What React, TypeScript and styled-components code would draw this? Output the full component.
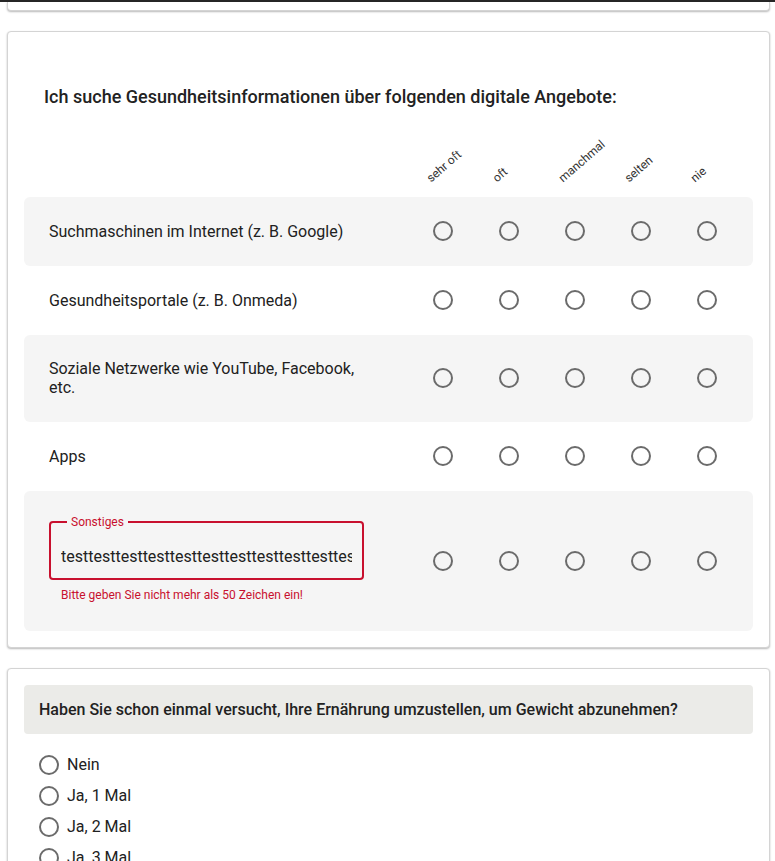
import styled, { createGlobalStyle } from "styled-components";

const GlobalStyle = createGlobalStyle`
  body {
    margin: 0;
    background: #ffffff;
    font-family: Roboto, "Liberation Sans", sans-serif;
    color: #212121;
  }
`;

const TopBar = styled.div`
  height: 2px;
  background: #262626;
`;

const Page = styled.div`
  padding: 0 5px 0 7px;
  display: flex;
  flex-direction: column;
  gap: 20px;
`;

const Card = styled.div<{ $stub?: boolean }>`
  background: #fff;
  border: 1px solid #d4d4d4;
  border-radius: 4px;
  box-shadow: 0 1px 2px rgba(0, 0, 0, 0.28);
  padding: ${(p) => (p.$stub ? "0" : "16px")};
  height: ${(p) => (p.$stub ? "8px" : "auto")};
  ${(p) => p.$stub && "border-top: none; border-radius: 0 0 4px 4px;"}
`;

const Title = styled.h2`
  margin: 0;
  padding: 38px 20px 0;
  font-size: 18px;
  line-height: 21px;
  font-weight: 500;
  color: #222;
`;

const Matrix = styled.div`
  display: flex;
  flex-direction: column;
`;

const Row = styled.div<{ $shaded?: boolean }>`
  display: grid;
  grid-template-columns: 1fr repeat(5, 66px);
  align-items: center;
  padding: 24px 13px 25px 25px;
  border-radius: 6px;
  background: ${(p) => (p.$shaded ? "#f5f5f5" : "transparent")};
`;

const HeaderRow = styled.div`
  display: grid;
  grid-template-columns: 1fr repeat(5, 66px);
  align-items: end;
  height: 90px;
  padding: 0 13px 11px 25px;
  box-sizing: border-box;
`;

const HeaderCell = styled.div`
  padding-left: 23px;
`;

const HeaderText = styled.span`
  display: inline-block;
  font-size: 12px;
  line-height: 14px;
  color: #333;
  white-space: nowrap;
  transform-origin: left bottom;
  transform: rotate(-41deg);
`;

const RowLabel = styled.div`
  font-size: 16px;
  line-height: 19px;
  padding-right: 46px;
`;

const Cell = styled.div`
  display: flex;
  justify-content: center;
`;

const Radio = styled.input.attrs({ type: "radio" })`
  appearance: none;
  margin: 0;
  width: 20px;
  height: 20px;
  border: 2px solid #6b6b6b;
  border-radius: 50%;
  box-sizing: border-box;
  background: transparent;
`;

const FieldWrap = styled.div`
  padding: 0 46px 4px 0;
`;

const Field = styled.fieldset`
  margin: 0;
  border: 2px solid #c8102e;
  border-radius: 4px;
  padding: 18px 10px 12px;
`;

const Legend = styled.legend`
  font-size: 12px;
  line-height: 14px;
  color: #c8102e;
  padding: 0 4px;
  margin-left: 6px;
`;

const Input = styled.input`
  display: block;
  width: 100%;
  border: none;
  outline: none;
  background: transparent;
  padding: 0;
  font-family: inherit;
  font-size: 16px;
  line-height: 19px;
  color: #212121;
`;

const ErrorText = styled.div`
  margin-top: 8px;
  padding-left: 12px;
  font-size: 12px;
  line-height: 14px;
  color: #c8102e;
`;

const Question = styled.div`
  background: #ebebe8;
  border-radius: 4px;
  padding: 15px;
  font-size: 16px;
  line-height: 19px;
  font-weight: 500;
  color: #222;
`;

const Options = styled.div`
  margin-top: 15px;
  padding-left: 15px;
  display: flex;
  flex-direction: column;
`;

const Option = styled.label`
  display: flex;
  align-items: center;
  gap: 8px;
  height: 31px;
  font-size: 16px;
`;

const columns = ["sehr oft", "oft", "manchmal", "selten", "nie"];
const items = [
  "Suchmaschinen im Internet (z. B. Google)",
  "Gesundheitsportale (z. B. Onmeda)",
  "Soziale Netzwerke wie YouTube, Facebook, etc.",
  "Apps",
];

function Radios({ name }: { name: string }) {
  return (
    <>
      {columns.map((c) => (
        <Cell key={c}>
          <Radio name={name} />
        </Cell>
      ))}
    </>
  );
}

export default function App() {
  return (
    <>
      <GlobalStyle />
      <TopBar />
      <Page>
        <Card $stub />
        <Card>
          <Title>Ich suche Gesundheitsinformationen über folgenden digitale Angebote:</Title>
          <HeaderRow>
            <div />
            {columns.map((c) => (
              <HeaderCell key={c}>
                <HeaderText>{c}</HeaderText>
              </HeaderCell>
            ))}
          </HeaderRow>
          <Matrix>
            {items.map((item, i) => (
              <Row key={item} $shaded={i % 2 === 0}>
                <RowLabel>{item}</RowLabel>
                <Radios name={"q" + i} />
              </Row>
            ))}
            <Row $shaded>
              <FieldWrap>
                <Field>
                  <Legend>Sonstiges</Legend>
                  <Input
                    readOnly
                    value="testtesttesttesttesttesttesttesttesttesttesttest"
                  />
                </Field>
                <ErrorText>Bitte geben Sie nicht mehr als 50 Zeichen ein!</ErrorText>
              </FieldWrap>
              <Radios name="q4" />
            </Row>
          </Matrix>
        </Card>
        <Card>
          <Question>
            Haben Sie schon einmal versucht, Ihre Ernährung umzustellen, um Gewicht abzunehmen?
          </Question>
          <Options>
            {["Nein", "Ja, 1 Mal", "Ja, 2 Mal", "Ja, 3 Mal", "Ja, mehr als 3 Mal"].map((o) => (
              <Option key={o}>
                <Radio name="diet" />
                {o}
              </Option>
            ))}
          </Options>
        </Card>
      </Page>
    </>
  );
}
